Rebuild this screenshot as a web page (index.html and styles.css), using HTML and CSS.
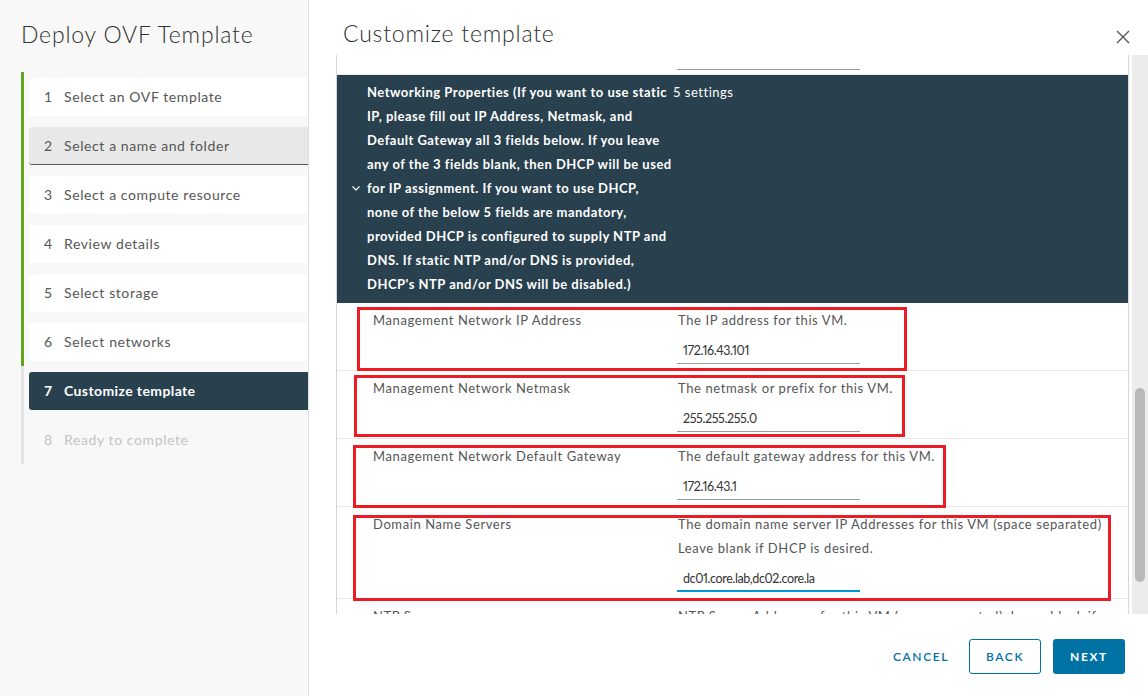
FILE: index.html
```html
<!DOCTYPE html>
<html lang="en">
  <head>
    <meta charset="UTF-8" />
    <title>Deploy OVF Template</title>
    <link rel="stylesheet" href="styles.css">
  </head>
  <body>
    <div class="wizard">
      <aside class="sidebar">
        <h1 class="sidebar-title">Deploy OVF Template</h1>
        <ol class="steps">
          <li class="step done"><div class="step-box"><span class="num">1</span>Select an OVF template</div></li>
          <li class="step done"><div class="step-box hover"><span class="num">2</span>Select a name and folder</div></li>
          <li class="step done"><div class="step-box"><span class="num">3</span>Select a compute resource</div></li>
          <li class="step done"><div class="step-box"><span class="num">4</span>Review details</div></li>
          <li class="step done"><div class="step-box"><span class="num">5</span>Select storage</div></li>
          <li class="step done"><div class="step-box"><span class="num">6</span>Select networks</div></li>
          <li class="step"><div class="step-box active"><span class="num">7</span>Customize template</div></li>
          <li class="step"><div class="step-box disabled"><span class="num">8</span>Ready to complete</div></li>
        </ol>
      </aside>

      <main class="content">
        <header class="content-head">
          <h2 class="content-title">Customize template</h2>
          <button class="close" aria-label="Close">
            <svg width="14" height="14" viewBox="0 0 14 14"><path d="M1 1 L13 13 M13 1 L1 13" stroke="#565656" stroke-width="1.4" fill="none"/></svg>
          </button>
        </header>

        <div class="scroll">
          <div class="grid">
            <div class="row partial">
              <div></div>
              <div><div class="input empty"></div></div>
            </div>

            <div class="group">
              <span class="chevron">
                <svg width="10" height="10" viewBox="0 0 10 10"><path d="M1.5 3.5 L5 7 L8.5 3.5" stroke="#fff" stroke-width="1.2" fill="none"/></svg>
              </span>
              <div class="group-text">Networking Properties (If you want to use static<br>IP, please fill out IP Address, Netmask, and<br>Default Gateway all 3 fields below. If you leave<br>any of the 3 fields blank, then DHCP will be used<br>for IP assignment. If you want to use DHCP,<br>none of the below 5 fields are mandatory,<br>provided DHCP is configured to supply NTP and<br>DNS. If static NTP and/or DNS is provided,<br>DHCP's NTP and/or DNS will be disabled.)</div>
              <div class="group-count">5 settings</div>
            </div>

            <div class="row">
              <div class="label">Management Network IP Address</div>
              <div class="value">
                <div class="desc">The IP address for this VM.</div>
                <div class="input">172.16.43.101</div>
              </div>
              <span class="mark" style="left: 20px; top: 4px; width: 550px; height: 64px;"></span>
            </div>

            <div class="row">
              <div class="label">Management Network Netmask</div>
              <div class="value">
                <div class="desc">The netmask or prefix for this VM.</div>
                <div class="input">255.255.255.0</div>
              </div>
              <span class="mark" style="left: 17px; top: 4px; width: 551px; height: 62px;"></span>
            </div>

            <div class="row">
              <div class="label">Management Network Default Gateway</div>
              <div class="value">
                <div class="desc">The default gateway address for this VM.</div>
                <div class="input">172.16.43.1</div>
              </div>
              <span class="mark" style="left: 16px; top: 6px; width: 593px; height: 63px;"></span>
            </div>

            <div class="row">
              <div class="label">Domain Name Servers</div>
              <div class="value">
                <div class="desc">The domain name server IP Addresses for this VM (space separated)<br>Leave blank if DHCP is desired.</div>
                <div class="input focus">dc01.core.lab,dc02.core.la</div>
              </div>
              <span class="mark" style="left: 16px; top: 8px; width: 758px; height: 86px;"></span>
            </div>

            <div class="row">
              <div class="label">NTP Servers</div>
              <div class="value">
                <div class="desc">NTP Server Addresses for this VM (space separated). Leave blank if</div>
              </div>
            </div>
          </div>
          <div class="scrollbar"><div class="thumb"></div></div>
        </div>

        <footer class="actions">
          <button class="btn link">Cancel</button>
          <button class="btn outline">Back</button>
          <button class="btn primary">Next</button>
        </footer>
      </main>
    </div>
  </body>
</html>
```

FILE: styles.css
```css
:root {
  --text: #565656;
  --dark: #29414e;
  --green: #62a420;
  --blue: #0072a3;
  --line: #e8e8e8;
  --mark: #ed1c24;
}

* {
  margin: 0;
  padding: 0;
  box-sizing: border-box;
}

body {
  font-family: Lato, "Noto Sans", sans-serif;
  color: var(--text);
  background: #fff;
  letter-spacing: 0.6px;
}

.wizard {
  display: flex;
  height: 696px;
  width: 1148px;
  overflow: hidden;
}

/* colonne de gauche */
.sidebar {
  width: 309px;
  flex-shrink: 0;
  background: #f8f8f8;
  border-right: 1px solid #dddddd;
}

.sidebar-title {
  font-size: 23px;
  font-weight: 300;
  line-height: 26px;
  color: #313131;
  padding: 21px 0 0 21px;
  margin-bottom: 25px;
  letter-spacing: 0.8px;
}

.steps {
  list-style: none;
  margin-left: 21px;
}

.step {
  border-left: 3px solid #e4e4e4;
  padding: 6px 0 5px 5px;
}

.step.done {
  border-left-color: var(--green);
}

.step-box {
  display: flex;
  align-items: center;
  height: 38px;
  background: #fff;
  border-radius: 3px 0 0 3px;
  font-size: 14px;
  padding: 0 0 1px 15px;
  color: var(--text);
}

.step-box .num {
  width: 20px;
}

.step-box.hover {
  background: #e8e8e8;
  border-bottom: 1px solid #565656;
  padding-bottom: 0;
}

.step-box.active {
  background: var(--dark);
  color: #fff;
  font-weight: 700;
  letter-spacing: 0.4px;
}

.step-box.disabled {
  background: transparent;
  color: #c4c4c4;
}

/* partie principale */
.content {
  flex: 1;
  display: flex;
  flex-direction: column;
  min-width: 0;
}

.content-head {
  height: 55px;
  display: flex;
  justify-content: space-between;
  align-items: flex-start;
  padding: 0 18px 0 34px;
}

.content-title {
  font-size: 23px;
  font-weight: 300;
  line-height: 26px;
  color: #313131;
  padding-top: 20px;
  letter-spacing: 0.8px;
}

.close {
  border: none;
  background: none;
  margin-top: 30px;
  width: 14px;
  height: 14px;
  display: block;
}

.scroll {
  height: 559px;
  display: flex;
  margin-left: 27px;
}

.grid {
  flex: 1;
  overflow: hidden;
  border-left: 1px solid #d7d7d7;
  border-right: 1px solid #d7d7d7;
}

.scrollbar {
  width: 16px;
  margin-left: 3px;
  background: #ececec;
  padding: 333px 3px 0;
}

.thumb {
  height: 194px;
  background: #b9b9b9;
  border-radius: 5px;
}

.row {
  position: relative;
  display: grid;
  grid-template-columns: 305px 1fr;
  padding: 5px 0 6px 36px;
  border-bottom: 1px solid var(--line);
  font-size: 13px;
  line-height: 24px;
}

.row.partial {
  padding-top: 0;
  padding-bottom: 4px;
}

.label {
  color: var(--text);
}

.desc {
  color: var(--text);
  white-space: nowrap;
}

.input {
  width: 183px;
  height: 24px;
  margin-top: 8px;
  padding-left: 6px;
  border-bottom: 1px solid #9a9a9a;
  color: #333;
  font-size: 12.5px;
  line-height: 22px;
  margin-left: -1px;
  letter-spacing: -0.4px;
  font-variant-numeric: proportional-nums;
}

.input.empty {
  height: 15px;
  margin-top: 0;
}

.input.focus {
  border-bottom: 2px solid #0095d3;
}

.mark {
  position: absolute;
  border: 3px solid var(--mark);
  z-index: 2;
}

.group {
  display: flex;
  background: var(--dark);
  color: #fff;
  font-size: 13px;
  font-weight: 700;
  line-height: 24px;
  letter-spacing: 0.5px;
  padding: 5px 0 7px;
}

.chevron {
  width: 30px;
  display: flex;
  justify-content: flex-end;
  padding-right: 6px;
  padding-top: 103px;
}

.group-text {
  width: 306px;
  white-space: nowrap;
}

.group-count {
  font-weight: 400;
  white-space: nowrap;
}

/* boutons du bas */
.actions {
  flex: 1;
  display: flex;
  justify-content: flex-end;
  align-items: flex-start;
  gap: 12px;
  padding: 25px 23px 0 0;
}

.btn {
  width: 72px;
  height: 35px;
  font-family: Lato, "Noto Sans", sans-serif;
  font-size: 12px;
  font-weight: 600;
  letter-spacing: 1.6px;
  text-transform: uppercase;
  border-radius: 3px;
  background: #fff;
  color: var(--blue);
  border: 1px solid transparent;
}

.btn.outline {
  border-color: var(--blue);
}

.btn.primary {
  background: var(--blue);
  color: #fff;
  font-weight: 700;
}
```
